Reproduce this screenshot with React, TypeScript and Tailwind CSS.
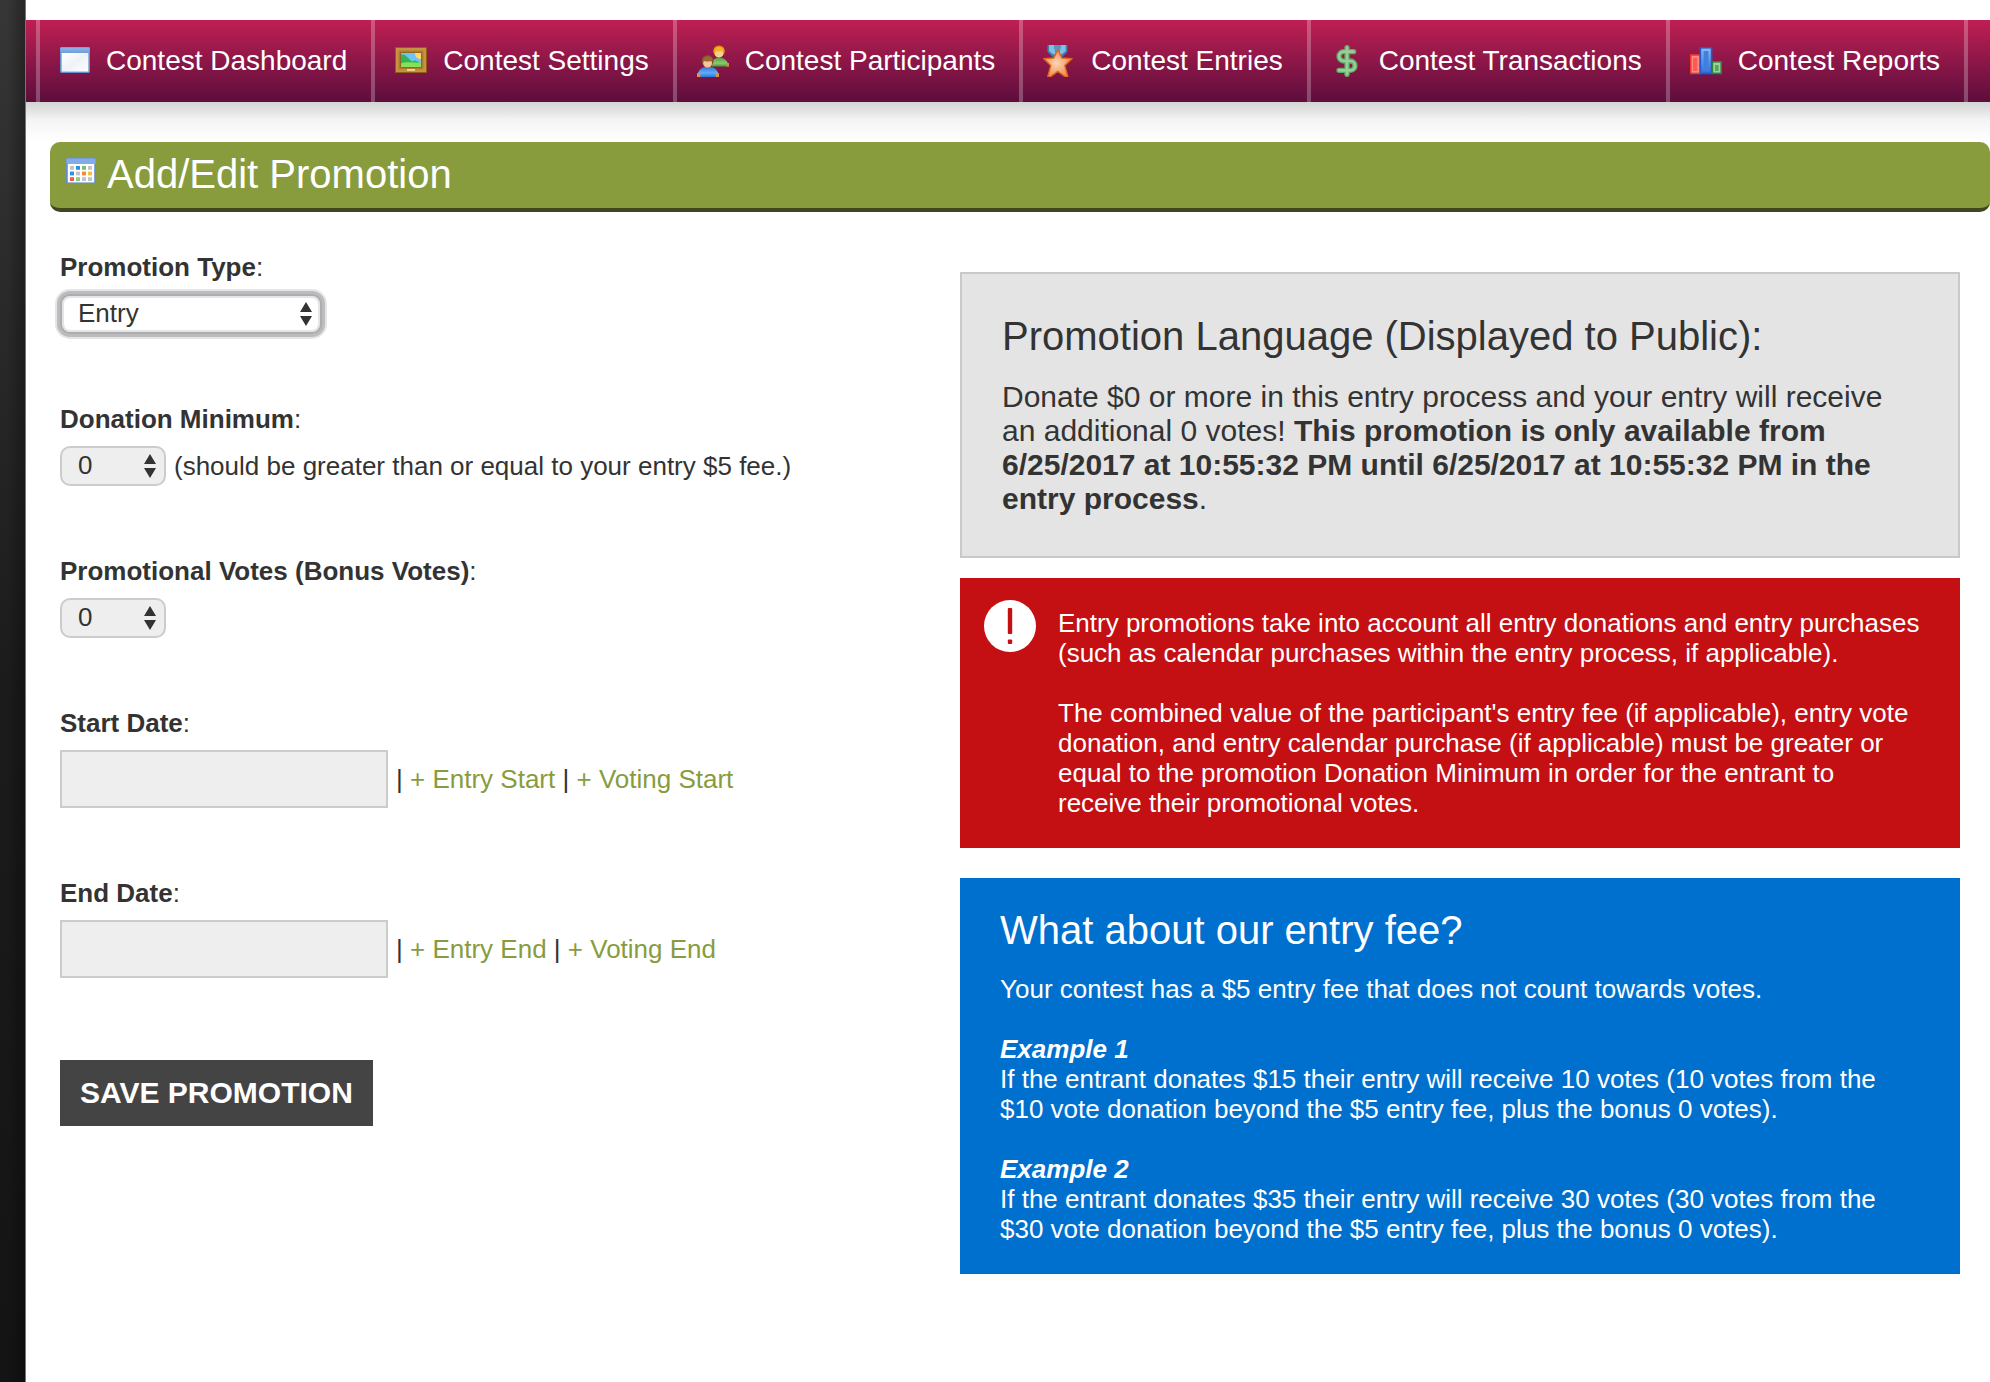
import { useState } from "react";
import type { ReactNode } from "react";
import { DollarSign } from "lucide-react";

const iconClass = "h-8 w-8 shrink-0";

function WindowIcon() {
  return (
    <svg viewBox="0 0 16 16" className={iconClass} aria-hidden="true">
      <defs>
        <linearGradient id="winBar" x1="0" y1="0" x2="0" y2="1">
          <stop offset="0" stopColor="#8db6ea" />
          <stop offset="1" stopColor="#6c9bdb" />
        </linearGradient>
        <linearGradient id="winBody" x1="0" y1="0" x2="1" y2="1">
          <stop offset="0" stopColor="#ffffff" />
          <stop offset="0.5" stopColor="#eef2f8" />
          <stop offset="1" stopColor="#ffffff" />
        </linearGradient>
      </defs>
      <rect x="1" y="1" width="15" height="13" rx="0.7" fill="#6690cd" />
      <rect x="1.2" y="1.2" width="14.6" height="3" rx="0.5" fill="url(#winBar)" />
      <rect x="1.8" y="4" width="13.4" height="9.3" fill="url(#winBody)" />
    </svg>
  );
}

function PictureIcon() {
  return (
    <svg viewBox="0 0 16 16" className={iconClass} aria-hidden="true">
      <rect x="0" y="1" width="16" height="13" fill="#8d5f1b" />
      <rect x="0.5" y="1.5" width="15" height="12" fill="#c69343" />
      <rect x="1.8" y="2.8" width="12.4" height="9.4" fill="#b07c2c" />
      <rect x="2.6" y="3.6" width="10.8" height="7.8" fill="#8a6426" />
      <rect x="3" y="4" width="10" height="7" fill="#6fc3f7" />
      <path d="M3 4.6 5 5l3.6 3.4L10 7.6l3 1.6V11H3Z" fill="#34b457" />
      <path d="M3 9.2c3-1 6-.2 10-.4V11H3Z" fill="#86e05a" />
      <path d="M10 4h3v3c-1.8.2-3-1.2-3-3Z" fill="#ffd96b" />
      <rect x="6" y="12" width="4" height="0.9" fill="#f0d9a0" />
    </svg>
  );
}

function PeopleIcon() {
  return (
    <svg viewBox="0 0 16 16" className={iconClass} aria-hidden="true">
      <defs>
        <linearGradient id="shirtGreen" x1="0" y1="0" x2="0" y2="1">
          <stop offset="0" stopColor="#4f9c3f" />
          <stop offset="0.6" stopColor="#8ccb70" />
          <stop offset="1" stopColor="#3f8f3a" />
        </linearGradient>
        <linearGradient id="shirtBlue" x1="0" y1="0" x2="0" y2="1">
          <stop offset="0" stopColor="#2f74cf" />
          <stop offset="0.6" stopColor="#62adfa" />
          <stop offset="1" stopColor="#2a78dd" />
        </linearGradient>
      </defs>
      <path d="M7.4 11C7.2 8 8.6 6.2 11 6.2S15.4 7.6 16 10.8H7.4Z" fill="url(#shirtGreen)" />
      <path d="M14.9 9h1.1v1.8h-1.3Z" fill="#d98a3a" />
      <circle cx="11" cy="3.1" r="2.9" fill="#e2960f" />
      <ellipse cx="11" cy="4.2" rx="2.1" ry="2.1" fill="#f8cf93" />
      <path d="M8.6 2.8C9 .4 13 .4 13.4 2.8 12 3.5 10 3.3 8.6 2.8Z" fill="#f2b52a" />
      <path d="M.2 16C.2 12.8 2.4 10.8 5.5 10.8S10.8 12.8 11 16Z" fill="url(#shirtBlue)" />
      <path d="M0 14h1.7v2H0ZM9.4 14H11v2H9.4Z" fill="#dd9344" />
      <circle cx="5.3" cy="8" r="3" fill="#81512a" />
      <ellipse cx="5.3" cy="9.1" rx="2.2" ry="2.2" fill="#f6c793" />
      <path d="M2.8 7.7C3.3 5 7.4 5 7.9 7.7 6.4 8.4 4.2 8.3 2.8 7.7Z" fill="#9b6738" />
    </svg>
  );
}

function MedalIcon() {
  return (
    <svg viewBox="0 0 16 16" className={iconClass} aria-hidden="true">
      <defs>
        <radialGradient id="medalStar" cx="0.45" cy="0.5" r="0.55">
          <stop offset="0" stopColor="#fbd5b5" />
          <stop offset="1" stopColor="#f08a4b" />
        </radialGradient>
      </defs>
      <path d="M2.2 0h10v3.4L9.6 6H4.8L2.2 3.4Z" fill="#3f7fae" />
      <path d="M3 0h2.4l1 4.6H5L3 3ZM9 0h2.4v3L9.4 4.6H8Z" fill="#7fbfe4" />
      <path d="M5.4 0H9L8 4.5H6.4Z" fill="#5596c2" />
      <path
        d="m7.4 2.4 2 4.1 5.2.3-3.7 3.5 1.5 5.4-1.4.1-3.6-2.6-3.6 2.6-1.4-.1 1.5-5.4L.3 6.8l5.1-.3Z"
        fill="url(#medalStar)"
        stroke="#e0661f"
        strokeWidth="0.7"
        strokeLinejoin="round"
      />
    </svg>
  );
}

function MoneyIcon() {
  return (
    <svg viewBox="0 0 32 32" className={iconClass} aria-hidden="true">
      <DollarSign x={0} y={0} width={32} height={32} color="#62a868" strokeWidth={4} />
      <DollarSign x={0} y={0} width={32} height={32} color="#97cf96" strokeWidth={2} />
    </svg>
  );
}

function ChartIcon() {
  return (
    <svg viewBox="0 0 16 16" className={iconClass} aria-hidden="true">
      <defs>
        <linearGradient id="barBlue" x1="0" y1="0" x2="0" y2="1">
          <stop offset="0" stopColor="#8fbcf2" />
          <stop offset="1" stopColor="#2f6fe0" />
        </linearGradient>
      </defs>
      <rect x="0" y="14" width="16" height="1" fill="#3c2f7c" opacity="0.6" />
      <rect x="0.4" y="5" width="4.6" height="9.2" fill="#ff8f84" stroke="#f0382f" strokeWidth="0.8" />
      <rect x="1.5" y="6.4" width="2.2" height="6.6" fill="#ff5a50" />
      <rect x="5.2" y="1.4" width="5.6" height="12.8" fill="url(#barBlue)" stroke="#2a58cc" strokeWidth="0.8" />
      <rect x="6.8" y="3" width="2.4" height="10" fill="#3f80dc" />
      <rect x="11.2" y="8.4" width="4.4" height="5.8" fill="#9ad59b" stroke="#2e8138" strokeWidth="0.8" />
      <rect x="12.5" y="10" width="1.8" height="3" fill="#55a85b" />
    </svg>
  );
}

const calendarDots = [
  ["#c4c4c4", "#2f8fe0", "#79c070", "#c4c4c4"],
  ["#2f8fe0", "#c4c4c4", "#f28a3c", "#f2c040"],
  ["#f25a4a", "#8ccb80", "#c4c4c4", "#c4c4c4"],
];

function CalendarIcon() {
  return (
    <svg viewBox="0 0 16 16" className={iconClass} aria-hidden="true">
      <rect x="1" y="1" width="15" height="13" rx="0.7" fill="#6690cd" />
      <rect x="1.2" y="1.2" width="14.6" height="2.8" rx="0.5" fill="#82ace6" />
      <rect x="1.9" y="4" width="13.2" height="9.2" fill="#ffffff" />
      {calendarDots.map((row, r) =>
        row.map((fill, c) => (
          <rect key={`${r}-${c}`} x={3 + c * 3} y={5 + r * 2.8} width="2" height="1.9" fill={fill} />
        )),
      )}
    </svg>
  );
}

const navItems = [
  { label: "Contest Dashboard", icon: WindowIcon },
  { label: "Contest Settings", icon: PictureIcon },
  { label: "Contest Participants", icon: PeopleIcon },
  { label: "Contest Entries", icon: MedalIcon },
  { label: "Contest Transactions", icon: MoneyIcon },
  { label: "Contest Reports", icon: ChartIcon },
];

function NavBar() {
  return (
    <nav className="overflow-hidden bg-linear-to-b from-[#c01f52] to-[#5d0d3c] pl-[10px]">
      <ul className="flex border-l-4 border-white/25">
        {navItems.map((item) => {
          const Icon = item.icon;
          return (
            <li
              key={item.label}
              className="shrink-0 border-r-4 border-white/25 pl-5 first:pl-[18px]"
            >
              <a
                href="#"
                className="flex h-[82px] items-center gap-4 pr-6 text-[28px] leading-8 whitespace-nowrap text-white"
              >
                <Icon />
                {item.label}
              </a>
            </li>
          );
        })}
      </ul>
    </nav>
  );
}

type SelectBoxProps = {
  id: string;
  value: string;
  options: string[];
  onChange: (value: string) => void;
  className: string;
};

function SelectBox({ id, value, options, onChange, className }: SelectBoxProps) {
  return (
    <div className="relative">
      <select
        id={id}
        value={value}
        onChange={(e) => onChange(e.target.value)}
        className={`block h-10 appearance-none rounded-[10px] border-2 pr-9 pb-[2px] pl-4 text-[26px] leading-[30px] text-[#333] outline-none ${className}`}
      >
        {options.map((o) => (
          <option key={o}>{o}</option>
        ))}
      </select>
      <svg
        viewBox="0 0 12 24"
        className="pointer-events-none absolute top-2 right-[10px] h-6 w-3"
        aria-hidden="true"
      >
        <path d="M6 0l6 10H0ZM6 24l6-10H0Z" fill="#333" />
      </svg>
    </div>
  );
}

function Field({ id, label, children }: { id: string; label: string; children: ReactNode }) {
  return (
    <div className="mb-[70px]">
      <label htmlFor={id} className="mb-3 block">
        <strong>{label}</strong>:
      </label>
      <div className="flex items-center gap-2">{children}</div>
    </div>
  );
}

function DateShortcuts({ items }: { items: string[] }) {
  return (
    <p>
      {items.map((item, i) => (
        <span key={item}>
          {i > 0 && " "}|{" "}
          <a href="#" className="text-[#889c3d]">
            + {item}
          </a>
        </span>
      ))}
    </p>
  );
}

const dateInput =
  "h-[58px] w-[328px] border-2 border-[#ccc] bg-[#eee] px-3 text-[26px] outline-none";

function PromotionForm() {
  const [type, setType] = useState("Entry");
  const [minimum, setMinimum] = useState("0");
  const [votes, setVotes] = useState("0");
  const [start, setStart] = useState("");
  const [end, setEnd] = useState("");

  return (
    <form onSubmit={(e) => e.preventDefault()}>
      <Field id="type" label="Promotion Type">
        <SelectBox
          id="type"
          value={type}
          options={["Entry", "Voting"]}
          onChange={setType}
          className="w-[262px] border-[#adadb0] bg-white shadow-[0_0_0_3px_#bcbcbf,0_0_0_5px_#e5e5e7,inset_0_0_0_2px_#e5e5e7]"
        />
      </Field>
      <Field id="minimum" label="Donation Minimum">
        <SelectBox
          id="minimum"
          value={minimum}
          options={["0", "5", "10", "15"]}
          onChange={setMinimum}
          className="w-[106px] border-[#ccc] bg-[#eee]"
        />
        <span>(should be greater than or equal to your entry $5 fee.)</span>
      </Field>
      <Field id="votes" label="Promotional Votes (Bonus Votes)">
        <SelectBox
          id="votes"
          value={votes}
          options={["0", "5", "10", "15"]}
          onChange={setVotes}
          className="w-[106px] border-[#ccc] bg-[#eee]"
        />
      </Field>
      <Field id="start" label="Start Date">
        <input
          id="start"
          type="text"
          value={start}
          onChange={(e) => setStart(e.target.value)}
          className={dateInput}
        />
        <DateShortcuts items={["Entry Start", "Voting Start"]} />
      </Field>
      <Field id="end" label="End Date">
        <input
          id="end"
          type="text"
          value={end}
          onChange={(e) => setEnd(e.target.value)}
          className={dateInput}
        />
        <DateShortcuts items={["Entry End", "Voting End"]} />
      </Field>
      <button
        type="submit"
        className="mt-3 bg-[#444] px-5 py-4 text-[30px] leading-[34px] font-bold text-white"
      >
        SAVE PROMOTION
      </button>
    </form>
  );
}

export default function App() {
  return (
    <div className="flex min-h-screen bg-white font-['Liberation_Sans',Arial,sans-serif] text-[26px] leading-[30px] text-[#333]">
      <div className="w-[26px] shrink-0 border-r border-[#777] bg-linear-to-b from-[#363636] via-[#1b1b1b] via-50% to-[#141414]">
        <div className="h-full bg-linear-to-r from-transparent from-30% to-black/30" />
      </div>

      <div className="min-w-0 flex-1 pt-5">
        <NavBar />
        <div className="h-10 bg-linear-to-b from-[#d3d3d3] via-[#f4f4f4] via-45% to-white" />

        <main className="pl-6">
          <header className="flex items-start gap-[11px] rounded-[10px] border-b-4 border-[#40471f] bg-[#889c3d] px-[14px] pt-[10px] pb-3">
            <div className="mt-1">
              <CalendarIcon />
            </div>
            <h1 className="text-[40px] leading-[44px] text-white">Add/Edit Promotion</h1>
          </header>

          <div className="grid grid-cols-[9fr_10fr] items-start pt-10 pr-[30px] pl-[10px]">
            <PromotionForm />

            <div className="mt-5">
              <section className="border-2 border-[#c9c9c9] bg-[#e4e4e4] p-10">
                <h2 className="mb-[22px] text-[40px] leading-[44px]">
                  Promotion Language (Displayed to Public):
                </h2>
                <p className="text-[30px] leading-[34px]">
                  Donate $0 or more in this entry process and your entry will receive an additional 0
                  votes!{" "}
                  <strong>
                    This promotion is only available from 6/25/2017 at 10:55:32 PM until 6/25/2017 at
                    10:55:32 PM in the entry process
                  </strong>
                  .
                </p>
              </section>

              <section className="mt-5 flex gap-[22px] bg-[#c40f13] py-[30px] pr-10 pl-6 text-white">
                <svg viewBox="0 0 52 52" className="-mt-2 h-[52px] w-[52px] shrink-0" aria-hidden="true">
                  <circle cx="26" cy="26" r="26" fill="#fff" />
                  <rect x="23.8" y="8" width="4.4" height="26" rx="1" fill="#c40f13" />
                  <rect x="23.8" y="39.5" width="4.4" height="4.5" rx="1" fill="#c40f13" />
                </svg>
                <div>
                  <p className="mb-[30px]">
                    Entry promotions take into account all entry donations and entry purchases (such
                    as calendar purchases within the entry process, if applicable).
                  </p>
                  <p>
                    The combined value of the participant's entry fee (if applicable), entry vote
                    donation, and entry calendar purchase (if applicable) must be greater or equal to
                    the promotion Donation Minimum in order for the entrant to receive their
                    promotional votes.
                  </p>
                </div>
              </section>

              <section className="mt-[30px] bg-[#0070ce] px-10 py-[30px] text-white">
                <h2 className="mb-[22px] text-[40px] leading-[44px]">What about our entry fee?</h2>
                <p className="mb-[30px]">
                  Your contest has a $5 entry fee that does not count towards votes.
                </p>
                <h3 className="font-bold italic">Example 1</h3>
                <p className="mb-[30px]">
                  If the entrant donates $15 their entry will receive 10 votes (10 votes from the $10
                  vote donation beyond the $5 entry fee, plus the bonus 0 votes).
                </p>
                <h3 className="font-bold italic">Example 2</h3>
                <p>
                  If the entrant donates $35 their entry will receive 30 votes (30 votes from the $30
                  vote donation beyond the $5 entry fee, plus the bonus 0 votes).
                </p>
              </section>
            </div>
          </div>
        </main>
      </div>
    </div>
  );
}
